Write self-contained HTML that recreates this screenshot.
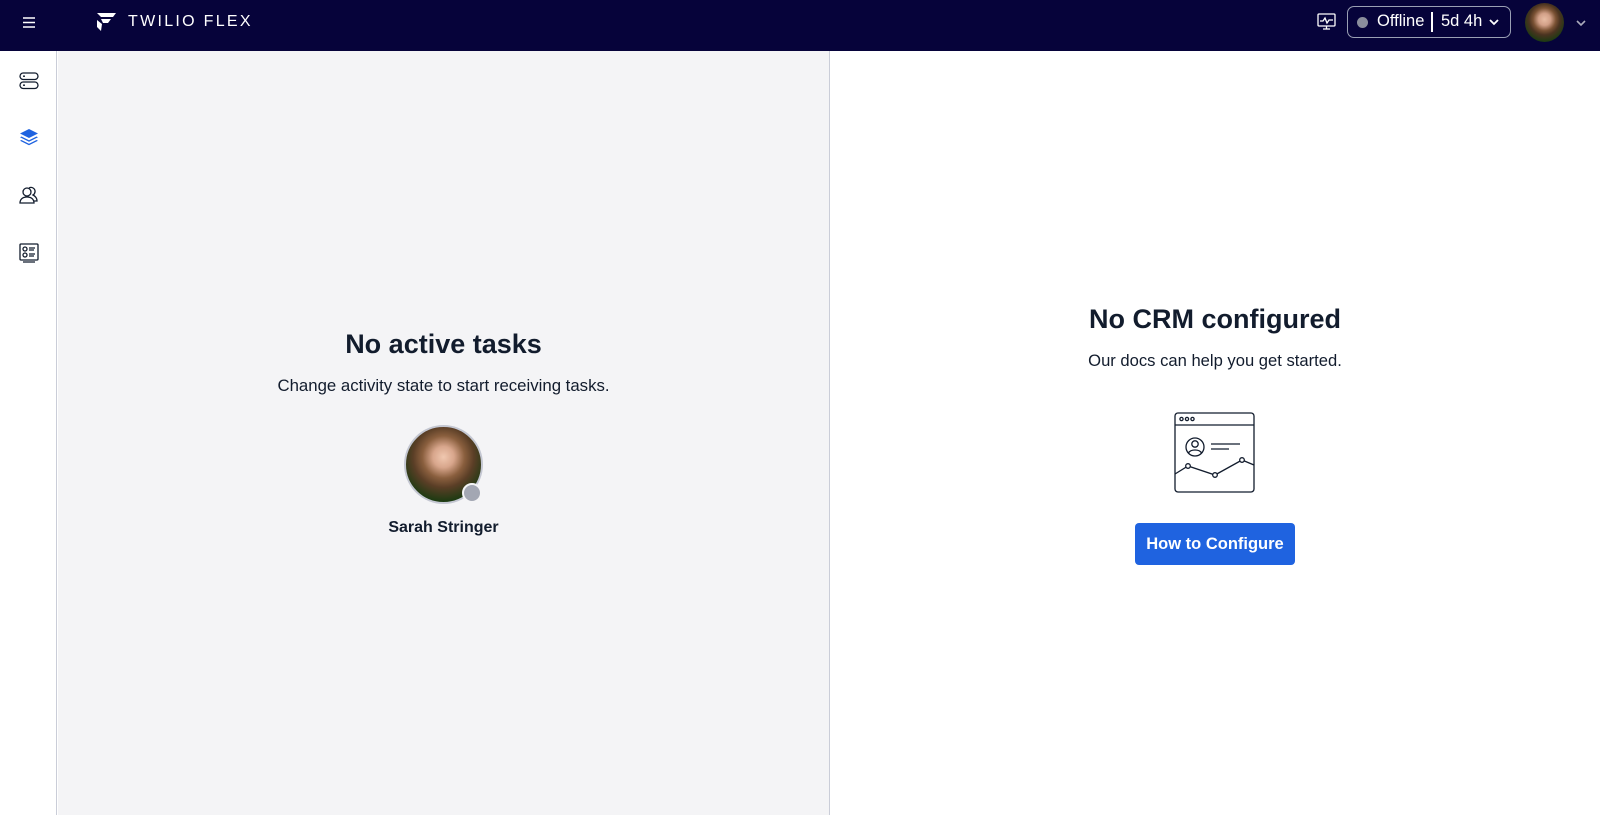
<!DOCTYPE html>
<html><head><style>
*{margin:0;padding:0;box-sizing:border-box}
body{width:1600px;height:815px;overflow:hidden;background:#fff;font-family:"Liberation Sans",sans-serif;color:#121c2d;position:relative}
.top{position:absolute;left:0;top:0;width:1600px;height:51px;background:#06033a;color:#fff}
.side{position:absolute;left:0;top:51px;width:57px;height:764px;background:#fff;border-right:1px solid #cacdd8}
.left{position:absolute;left:58px;top:51px;width:772px;height:764px;background:#f4f4f6;border-right:1px solid #cacdd8}
.right{position:absolute;left:830px;top:51px;width:770px;height:764px;background:#fff}
.c{position:absolute;width:100%;text-align:center;white-space:nowrap}
</style></head><body>
<div class="top">
 <svg style="position:absolute;left:23px;top:17px" width="12" height="11"><path d="M0 1h12M0 5.5h12M0 10h12" stroke="#fff" stroke-width="1.4"/></svg>
 <svg style="position:absolute;left:97px;top:13px" width="20" height="19" viewBox="0 0 20 19"><path d="M0 0h19l-3 4H4z M4 6h10l-3 4H6z M0 7l5 4-1 7L0 14z" fill="#fff"/></svg>
 <div style="position:absolute;left:128px;top:12px;font-size:16px;line-height:20px;letter-spacing:2.3px">TWILIO FLEX</div>
 <svg style="position:absolute;left:1317px;top:13px" width="19" height="18" viewBox="0 0 19 18" fill="none" stroke="#fff" stroke-width="1.3"><rect x="1" y="1" width="17" height="12" rx="1"/><path d="M3 8h3l2-3 2 5 2-3h4M6 16h7M9.5 13v3"/></svg>
 <div style="position:absolute;left:1347px;top:6px;width:164px;height:32px;border:1.5px solid #9aa0b4;border-radius:7px"></div>
 <div style="position:absolute;left:1357px;top:17px;width:11px;height:11px;border-radius:50%;background:#8a8e9c"></div>
 <div style="position:absolute;left:1377px;top:11px;font-size:16.5px;line-height:20px">Offline</div>
 <div style="position:absolute;left:1431px;top:12px;width:1.5px;height:20px;background:#fff"></div>
 <div style="position:absolute;left:1441px;top:11px;font-size:16.5px;line-height:20px">5d 4h</div>
 <svg style="position:absolute;left:1489px;top:19px" width="10" height="7"><path d="M1 1l4 4 4-4" stroke="#fff" stroke-width="1.8" fill="none"/></svg>
 <div style="position:absolute;left:1525px;top:3px;width:39px;height:39px;border-radius:50%;background:radial-gradient(circle at 50% 42%,#e8bda4 0,#d2a088 20%,#7a5234 38%,#4a3320 52%,#1c3a12 75%)"></div>
 <svg style="position:absolute;left:1576px;top:20px" width="10" height="7"><path d="M1 1l4 4 4-4" stroke="#aab" stroke-width="1.6" fill="none"/></svg>
</div>
<div class="side">
 <svg style="position:absolute;left:19px;top:21px" width="20" height="18" viewBox="0 0 20 18" fill="none" stroke="#121c2d" stroke-width="1.3"><rect x="1" y="1" width="18" height="6.5" rx="3.2"/><rect x="1" y="10" width="18" height="6.5" rx="3.2"/><path d="M4 4.2h2M4 13.2h2"/></svg>
 <svg style="position:absolute;left:19px;top:77px" width="20" height="19" viewBox="0 0 20 19" fill="#1f63e0"><path d="M10 1l9 4.5-9 4.5L1 5.5z"/><path d="M2.5 8.5l7.5 3.7 7.5-3.7 1.5.8-9 4.5L1 9.3z"/><path d="M2.5 12l7.5 3.7 7.5-3.7 1.5.8-9 4.5L1 12.8z"/></svg>
 <svg style="position:absolute;left:19px;top:134px" width="20" height="20" viewBox="0 0 20 20" fill="none" stroke="#121c2d" stroke-width="1.3"><circle cx="8" cy="7" r="4"/><path d="M1 18c0-4 3-6 7-6s7 2 7 6z"/><path d="M10 3a4 4 0 0 1 6 4 4 4 0 0 1-2 3c2 1 4 3 4 6h-3"/></svg>
 <svg style="position:absolute;left:19px;top:192px" width="20" height="20" viewBox="0 0 20 20" fill="none" stroke="#121c2d" stroke-width="1.3"><rect x="1" y="1" width="18" height="16" rx="1"/><circle cx="6" cy="6" r="2"/><circle cx="6" cy="12" r="2"/><path d="M10 5h6M10 7h5M10 11h6M10 13h5M4 19h12"/></svg>
</div>
<div class="left">
 <div class="c" style="top:277px;font-size:27px;line-height:32px;font-weight:bold">No active tasks</div>
 <div class="c" style="top:325px;font-size:16.8px;line-height:20px">Change activity state to start receiving tasks.</div>
 <div style="position:absolute;left:346px;top:374px;width:79px;height:79px;border-radius:50%;border:2px solid #c4c7d2;background:radial-gradient(circle at 50% 40%,#f0c8b0 0,#d8a68c 18%,#8a5f3e 36%,#5a3e26 52%,#173a10 78%)"></div>
 <div style="position:absolute;left:404px;top:432px;width:20px;height:20px;border-radius:50%;background:#a3a7b3;border:2px solid #f4f4f6"></div>
 <div class="c" style="top:467px;font-size:16px;line-height:20px;font-weight:bold">Sarah Stringer</div>
</div>
<div class="right">
 <div class="c" style="top:252px;font-size:27px;line-height:32px;font-weight:bold">No CRM configured</div>
 <div class="c" style="top:300px;font-size:16.6px;line-height:20px">Our docs can help you get started.</div>
 <svg style="position:absolute;left:344px;top:361px" width="81" height="82" viewBox="0 0 81 82" fill="none" stroke="#121c2d" stroke-width="1.3"><rect x="1" y="1" width="79" height="79" rx="3"/><path d="M1 13h79"/><circle cx="7.5" cy="7" r="1.6"/><circle cx="13" cy="7" r="1.6"/><circle cx="18.5" cy="7" r="1.6"/><circle cx="21" cy="35" r="9"/><circle cx="21" cy="32" r="3.2"/><path d="M14.5 41c2-4 11-4 13 0M37 32h29M37 37h18M1 62l13-8 27 9 27-15 12 5"/><circle cx="14" cy="54" r="2.3" fill="#fff"/><circle cx="41" cy="63" r="2.3" fill="#fff"/><circle cx="68" cy="48" r="2.3" fill="#fff"/></svg>
 <div style="position:absolute;left:305px;top:472px;width:160px;height:42px;background:#1f63e0;border-radius:4px;color:#fff;font-size:16.5px;font-weight:bold;text-align:center;line-height:42px">How to Configure</div>
</div>
</body></html>
